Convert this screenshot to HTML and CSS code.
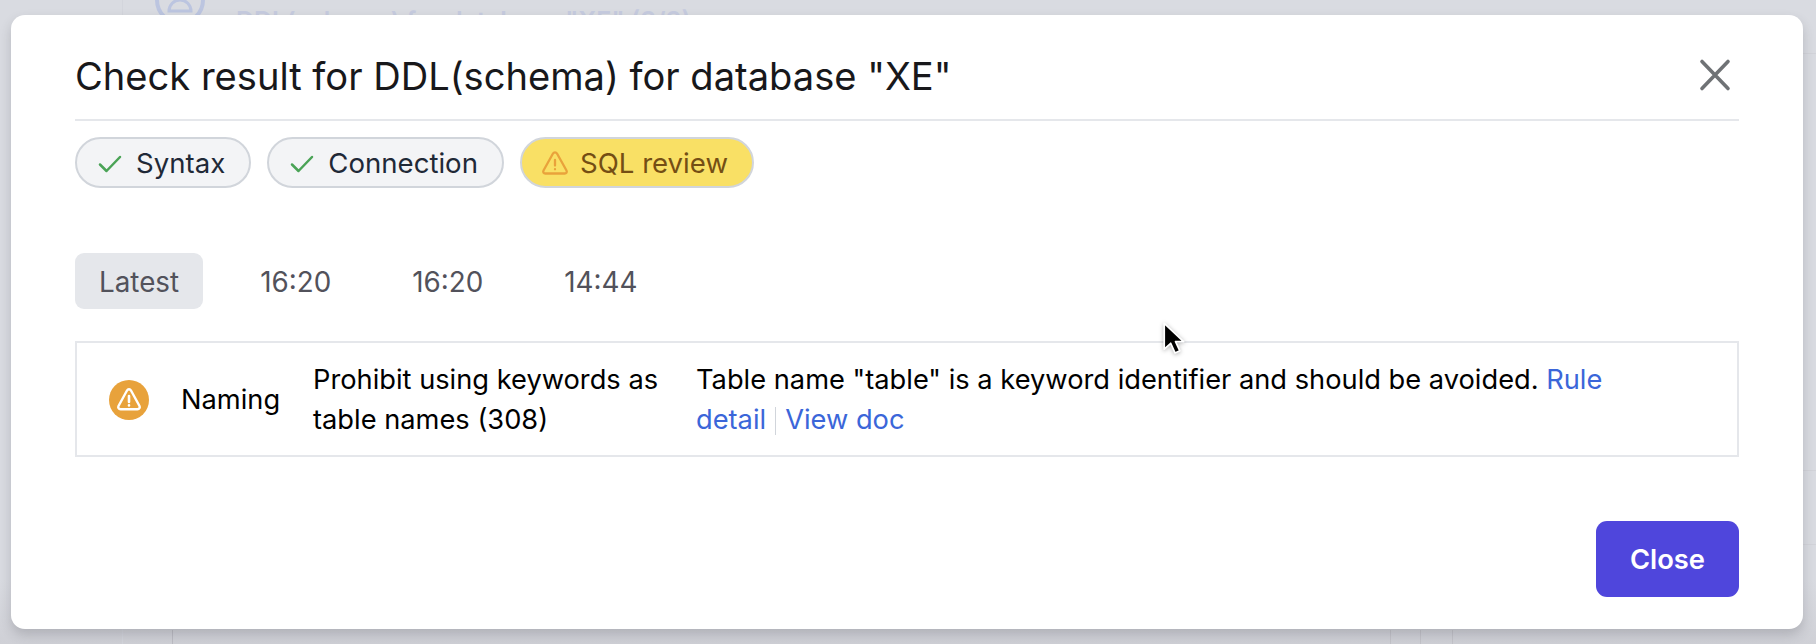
FILE: index.html
```html
<!DOCTYPE html>
<html lang="en">
<head>
<meta charset="utf-8">
<title>Check result</title>
<link rel="stylesheet" href="styles.css">
</head>
<body>
<div class="backdrop">
  <svg class="bg-avatar" width="52" height="30" viewBox="0 0 52 30" fill="none" stroke="#bcc5e0" stroke-width="4">
    <circle cx="26" cy="0" r="23"/>
    <path d="M15 11a11 11 0 0 1 22 0z" stroke-width="3"/>
  </svg>
  <div class="bg-title">DDL(schema) for database "XE" (3/3)</div>
  <div class="bg-vline bg-v1"></div>
  <div class="bg-vline bg-v2"></div>
  <div class="bg-vline bg-v3"></div>
  <div class="bg-vline bg-v4"></div>
  <div class="bg-vline bg-v5"></div>
  <div class="bg-hline bg-h1"></div>
  <div class="bg-hline bg-h2"></div>
  <div class="bg-hline bg-h3"></div>
</div>

<main class="modal">
  <header class="modal-head">
    <h1 class="modal-title">Check result for DDL(schema) for database "XE"</h1>
    <button class="icon-btn" aria-label="Close">
      <svg width="36" height="36" viewBox="0 0 36 36" fill="none" stroke="#6f7275" stroke-width="3.6" stroke-linecap="round"><path d="M5 3.500 31 30.500M31 3.500 5 30.500"/></svg>
    </button>
  </header>

  <div class="pills">
    <div class="pill">
      <svg class="pill-icon" width="28" height="28" viewBox="0 0 28 28" fill="none" stroke="#4aa356" stroke-width="2.500" stroke-linecap="round" stroke-linejoin="round"><path d="M4 15.500 10.500 22 24 8"/></svg>
      <span>Syntax</span>
    </div>
    <div class="pill">
      <svg class="pill-icon" width="28" height="28" viewBox="0 0 28 28" fill="none" stroke="#4aa356" stroke-width="2.500" stroke-linecap="round" stroke-linejoin="round"><path d="M4 15.500 10.500 22 24 8"/></svg>
      <span>Connection</span>
    </div>
    <div class="pill pill-warn">
      <svg class="pill-icon" width="28" height="28" viewBox="0 0 28 28" fill="none" stroke="#e9a23b" stroke-width="2.300" stroke-linecap="round" stroke-linejoin="round"><path d="M12 4.500 2.500 21.500c-.8 1.500.2 3 1.800 3h19.400c1.600 0 2.600-1.500 1.800-3L16 4.500c-.9-1.600-3.100-1.600-4 0z"/><path d="M14 11v5.500M14 20.200v.1"/></svg>
      <span>SQL review</span>
    </div>
  </div>

  <nav class="tabs">
    <div class="tab tab-active">Latest</div>
    <div class="tab">16:20</div>
    <div class="tab">16:20</div>
    <div class="tab">14:44</div>
  </nav>

  <section class="result">
    <div class="result-status">
      <svg width="40" height="40" viewBox="0 0 40 40"><circle cx="20" cy="20" r="20" fill="#e8a23b"/><path d="M18 10.500 9.500 26c-.8 1.500.2 3.200 2 3.200h17c1.800 0 2.800-1.700 2-3.200L22 10.500c-.9-1.700-3.100-1.700-4 0z" fill="none" stroke="#fff" stroke-width="2.400" stroke-linejoin="round"/><path d="M20 16v6M20 25.200v.2" stroke="#fff" stroke-width="2.600" stroke-linecap="round"/></svg>
    </div>
    <div class="result-cat">Naming</div>
    <div class="result-rule">Prohibit using keywords as table names (308)</div>
    <div class="result-msg">Table name "table" is a keyword identifier and should be avoided. <a class="link">Rule detail</a><span class="sep"></span><a class="link">View doc</a></div>
  </section>

  <footer class="modal-foot">
    <button class="btn-primary">Close</button>
  </footer>
</main>

<svg class="cursor" width="28" height="37" viewBox="0 0 26 34"><path d="M3 2v24l6-5.500 4 9 4.500-2-4-8.500H21z" fill="#000" stroke="#fff" stroke-width="1.600" stroke-linejoin="round"/></svg>
</body>
</html>
```
FILE: styles.css
```css
* { box-sizing: border-box; }
html, body { margin: 0; height: 100%; }
body {
  width: 1816px;
  height: 644px;
  overflow: hidden;
  padding: 15px 13px 0 11px;
  background: linear-gradient(#d9dbe1 0, #d9dbe1 90%, #cfd0d6 100%);
  font-family: Inter, "Liberation Sans", sans-serif;
  color: #000;
  position: relative;
}
.backdrop { position: absolute; inset: 0; overflow: hidden; }
.bg-avatar { position: absolute; left: 154px; top: 0; }
.bg-title {
  position: absolute; left: 236px; top: 6px;
  font-size: 25px; font-weight: 600; line-height: 30px; color: #c6cbdf; white-space: nowrap;
}
.bg-vline { position: absolute; width: 1px; background: #cfd0d6; }
.bg-v1 { left: 122px; top: 0; bottom: 0; background: #d3d5dc; }
.bg-v2 { left: 172px; top: 630px; bottom: 0; background: #bcbcc3; }
.bg-v3 { left: 1390px; top: 630px; bottom: 0; background: #c3c3c9; }
.bg-v4 { left: 1420px; top: 630px; bottom: 0; background: #c3c3c9; }
.bg-v5 { left: 1452px; top: 630px; bottom: 0; background: #c3c3c9; }
.bg-hline { position: absolute; left: 1803px; right: 0; height: 1px; background: #d2d3d9; }
.bg-h1 { top: 53px; }
.bg-h2 { top: 470px; }
.bg-h3 { top: 544px; }

.modal {
  position: relative;
  width: 1792px;
  height: 614px;
  padding: 40px 64px 32px;
  background: #fff;
  border-radius: 14px;
  box-shadow: 0 6px 12px rgba(60, 60, 70, .22);
  display: flex;
  flex-direction: column;
}
.modal-head {
  display: flex;
  align-items: center;
  justify-content: space-between;
  height: 66px;
  padding-bottom: 22px;
  border-bottom: 2px solid #e5e7eb;
}
.modal-title { margin: 0; font-size: 38.100px; line-height: 44px; font-weight: 400; color: #18181b; }
.icon-btn { border: 0; padding: 0; margin-right: 6px; background: none; display: flex; }

.pills { display: flex; gap: 16px; margin-top: 16px; }
.pill {
  display: flex;
  align-items: center;
  gap: 12px;
  height: 51px;
  padding: 0 24px 0 19px;
  border: 2px solid #d1d5db;
  border-radius: 26px;
  background: #f3f4f6;
  font-size: 27.600px;
  color: #1f2937;
}
.pill-warn { gap: 11px; background: #f9e065; color: #744e14; }
.pill-icon { flex: none; }

.tabs { display: flex; gap: 33px; margin-top: 65px; }
.tab {
  height: 56px;
  padding: 1px 24px 0;
  display: flex;
  align-items: center;
  border-radius: 9px;
  font-size: 27.800px;
  color: #52525b;
}
.tab-active { background: #e5e7eb; }

.result {
  display: flex;
  align-items: center;
  height: 116px;
  padding-top: 2px;
  margin-top: 32px;
  border: 2px solid #e5e7eb;
  font-size: 27.250px;
  line-height: 40px;
}
.result-status { flex: none; width: 104px; padding-left: 32px; display: flex; }
.result-cat { flex: none; width: 132px; }
.result-rule { flex: none; width: 382px; }
.result-msg { flex: none; width: 960px; padding-left: 1px; }
.link { color: #3b66d9; }
.sep { display: inline-block; width: 1px; height: 28px; margin: 0 9px; background: #d1d5db; vertical-align: -6px; }

.modal-foot { display: flex; justify-content: flex-end; margin-top: 64px; }
.btn-primary {
  width: 143px;
  height: 76px;
  border: 0;
  border-radius: 11px;
  background: #4f46dc;
  color: #fff;
  font: 600 27.300px Inter, "Liberation Sans", sans-serif;
}
.cursor { position: absolute; left: 1161px; top: 321px; filter: drop-shadow(0 1px 2px rgba(0,0,0,.3)); }
```
